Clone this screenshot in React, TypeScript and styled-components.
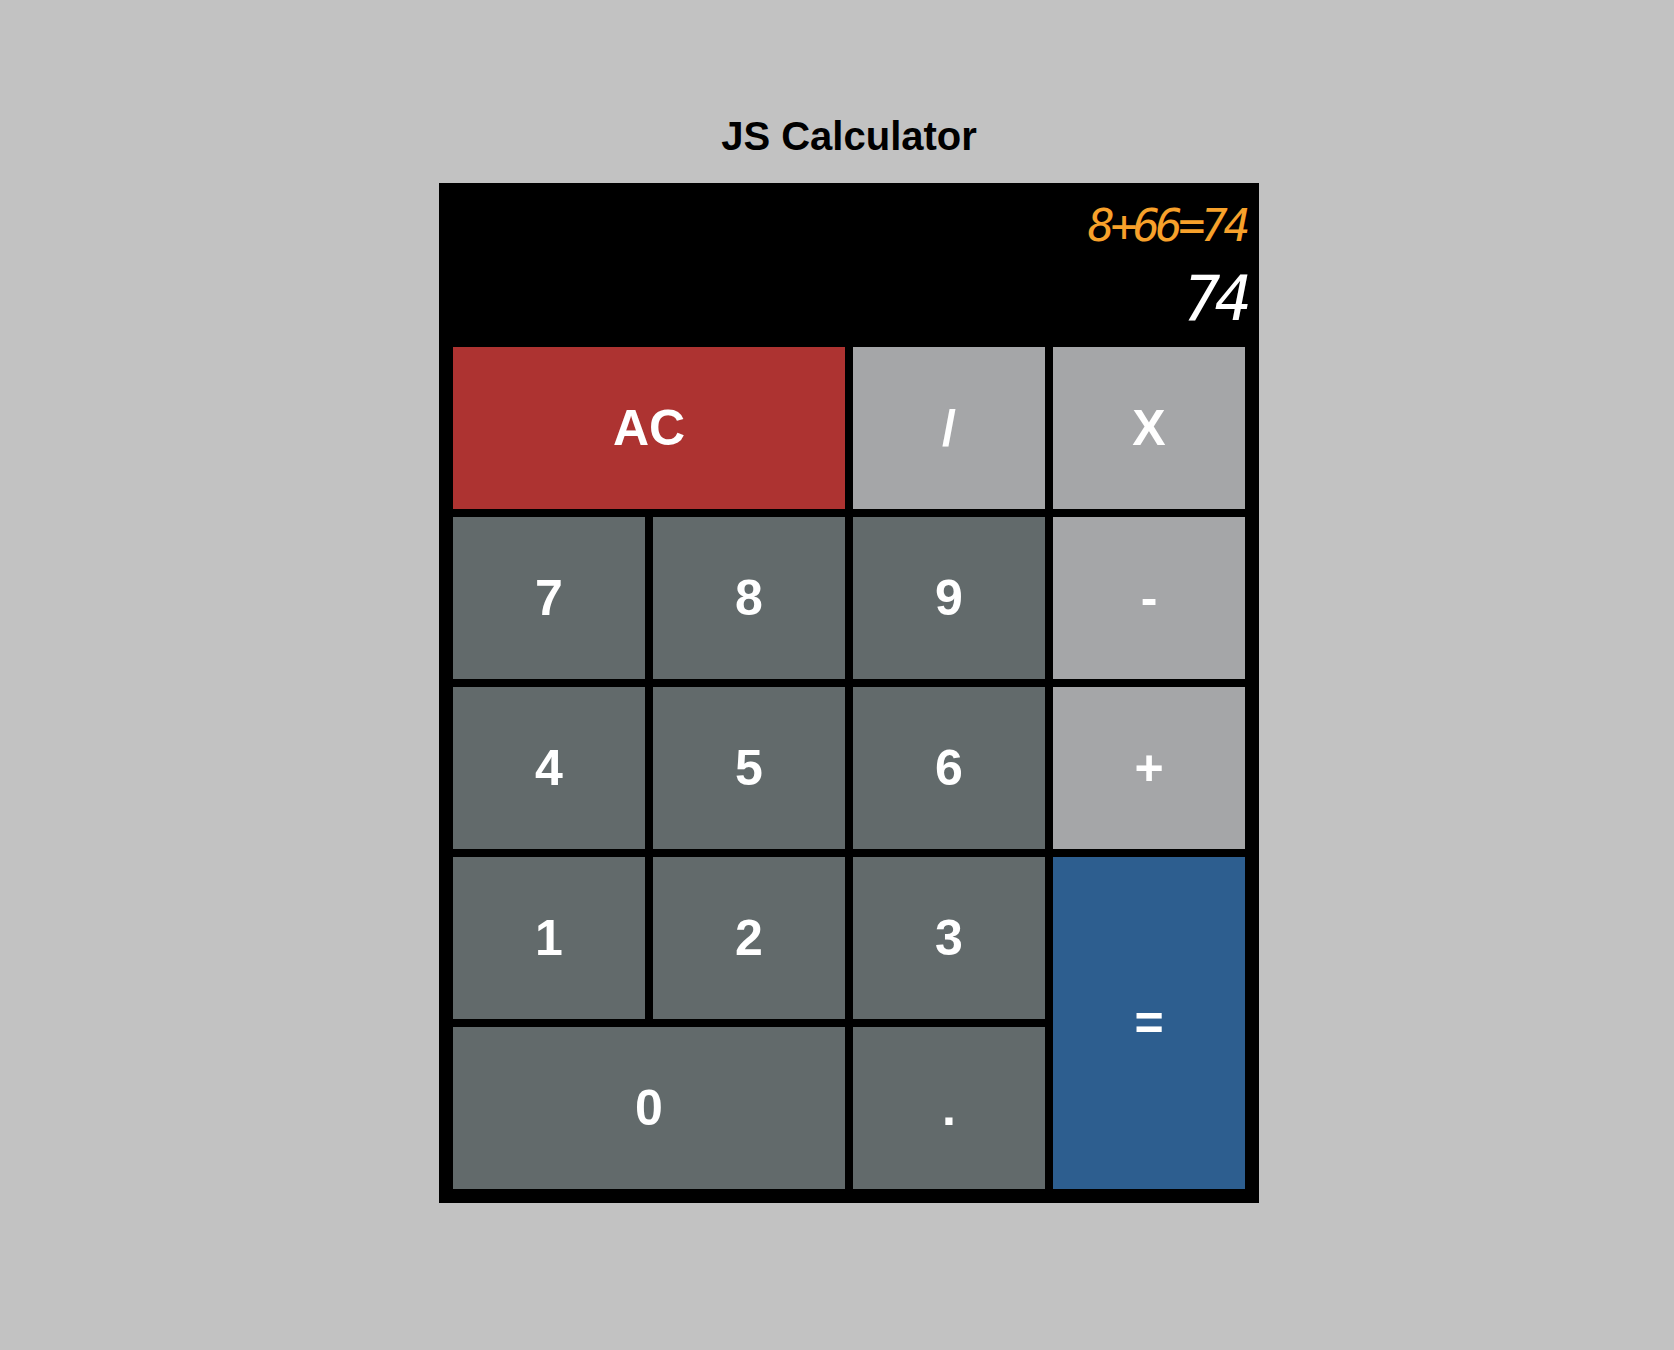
import React from "react";
import styled, { createGlobalStyle } from "styled-components";

const GlobalStyle = createGlobalStyle`
  html, body {
    margin: 0;
    padding: 0;
    background: #c2c2c2;
  }
  body {
    font-family: "Liberation Sans", Arial, sans-serif;
  }
`;

const Page = styled.main`
  min-height: 1350px;
  display: flex;
  flex-direction: column;
  align-items: center;
  padding: 113px 0 0 24px;
  box-sizing: border-box;
`;

const Title = styled.h1`
  margin: 0 0 24px;
  font-family: "Liberation Sans", Arial, sans-serif;
  font-weight: 700;
  font-size: 40px;
  line-height: 46px;
  color: #000;
`;

const Calculator = styled.div`
  width: 820px;
  box-sizing: border-box;
  padding: 10px;
  background: #000;
`;

const Display = styled.div`
  height: 150px;
  box-sizing: border-box;
  padding: 10px 3px 0 0;
  display: flex;
  flex-direction: column;
  align-items: flex-end;
`;

const Formula = styled.div`
  font-family: "DejaVu Sans Mono", monospace;
  font-style: italic;
  font-size: 45px;
  line-height: 45px;
  letter-spacing: -4.5px;
  color: #f7a12b;
`;

const Current = styled.div`
  margin-top: 20px;
  font-family: "DejaVu Sans Mono", monospace;
  font-style: italic;
  font-size: 62px;
  line-height: 62px;
  letter-spacing: -6px;
  color: #fff;
`;

const Keypad = styled.div`
  display: grid;
  grid-template-columns: repeat(4, 192px);
  grid-auto-rows: 162px;
  gap: 8px;
  padding: 4px;
`;

type Kind = "clear" | "op" | "num" | "equals";

const colors: Record<Kind, string> = {
  clear: "#ad3331",
  op: "#a5a6a8",
  num: "#626a6b",
  equals: "#2d5e8f",
};

const Key = styled.button<{ $kind: Kind; $wide?: boolean; $tall?: boolean }>`
  border: none;
  margin: 0;
  padding: 0;
  background: ${(p) => colors[p.$kind]};
  color: #fff;
  font-family: "Liberation Sans", Arial, sans-serif;
  font-weight: 700;
  font-size: 50px;
  display: flex;
  align-items: center;
  justify-content: center;
  cursor: pointer;
  grid-column: ${(p) => (p.$wide ? "span 2" : "span 1")};
  grid-row: ${(p) => (p.$tall ? "span 2" : "span 1")};
`;

export default function App() {
  return (
    <>
      <GlobalStyle />
      <Page>
        <Title>JS Calculator</Title>
        <Calculator>
          <Display>
            <Formula>8+66=74</Formula>
            <Current>74</Current>
          </Display>
          <Keypad>
            <Key $kind="clear" $wide>AC</Key>
            <Key $kind="op">/</Key>
            <Key $kind="op">X</Key>
            <Key $kind="num">7</Key>
            <Key $kind="num">8</Key>
            <Key $kind="num">9</Key>
            <Key $kind="op">-</Key>
            <Key $kind="num">4</Key>
            <Key $kind="num">5</Key>
            <Key $kind="num">6</Key>
            <Key $kind="op">+</Key>
            <Key $kind="num">1</Key>
            <Key $kind="num">2</Key>
            <Key $kind="num">3</Key>
            <Key $kind="equals" $tall>=</Key>
            <Key $kind="num" $wide>0</Key>
            <Key $kind="num">.</Key>
          </Keypad>
        </Calculator>
      </Page>
    </>
  );
}
